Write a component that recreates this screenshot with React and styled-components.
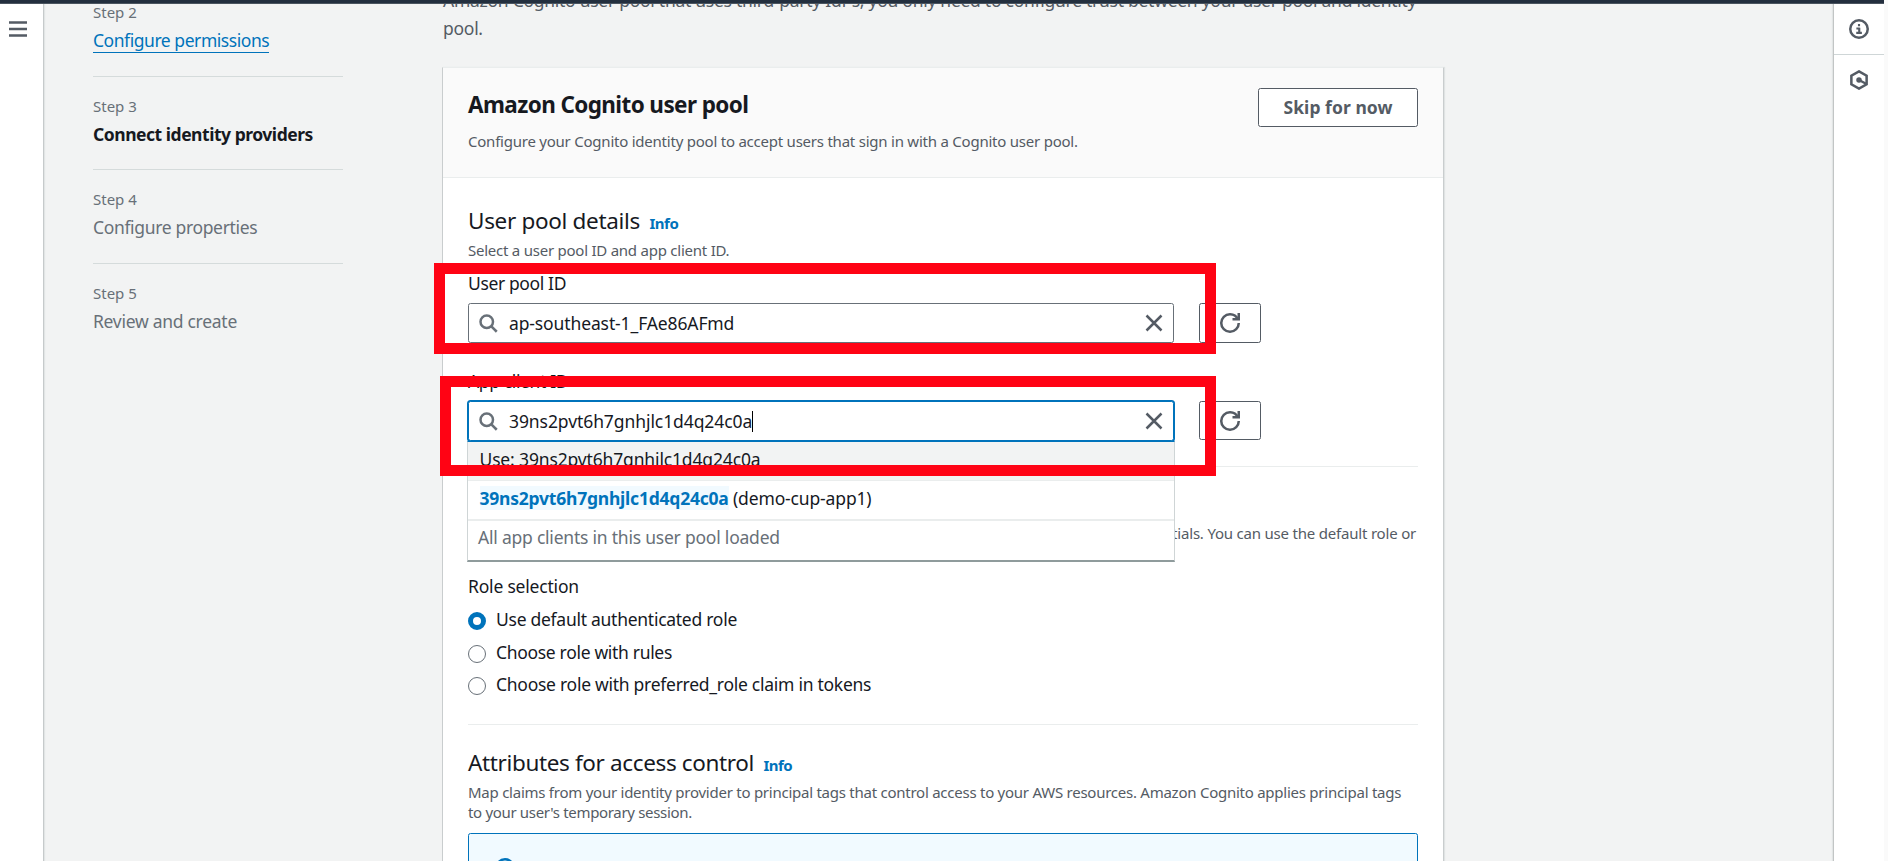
import React from 'react';
import styled, { createGlobalStyle, css } from 'styled-components';

const GlobalStyle = createGlobalStyle`
  * { box-sizing: border-box; }
  body {
    margin: 0;
    background: #f2f3f3;
    font-family: "Noto Sans", "Open Sans", sans-serif;
    font-size: 17.5px;
    line-height: 24px;
    color: #16191f;
  }
  h2, h3, p, ol { margin: 0; padding: 0; font-weight: 400; }
`;

const track = css`
  letter-spacing: ${(p) => p.$track || 0}px;
`;

const Screen = styled.div`
  position: relative;
  display: flex;
  width: 1888px;
  height: 861px;
  overflow: hidden;
`;

const Console = styled.div`
  display: flex;
  flex-direction: column;
  width: 1884px;
`;

const ScrollStrip = styled.div`
  width: 4px;
  background: #fafafa;
`;

const TopBar = styled.header`
  flex: none;
  height: 4px;
  background: #232f3e;
  border-bottom: 1px solid #4a545f;
`;

const Body = styled.div`
  display: flex;
  flex: 1;
  min-height: 0;
  overflow: hidden;
`;

const LeftRail = styled.aside`
  flex: none;
  width: 44px;
  padding: 15px 0 0 8px;
  background: #fff;
  border-right: 1px solid #c6cacb;
  box-shadow: 1px 0 1px #e2e5e5;
`;

const RightRail = styled.aside`
  flex: none;
  width: 51px;
  margin-left: auto;
  background: #fff;
  border-left: 1px solid #c2c5c5;
  box-shadow: -1px 0 1px #e2e5e5;
`;

const RailItem = styled.div`
  display: flex;
  align-items: center;
  justify-content: center;
  height: ${(p) => (p.$divided ? 51 : 50)}px;
  border-bottom: ${(p) => (p.$divided ? '1px solid #cfd6d7' : 'none')};
`;

const Icon = styled.svg.attrs({ viewBox: '0 0 16 16', fill: 'none', stroke: 'currentColor' })`
  display: block;
  flex: none;
  width: 20px;
  height: 20px;
  color: ${(p) => p.$color || '#545b64'};
  stroke-width: 2;
`;

const Steps = styled.ol`
  flex: none;
  width: 250px;
  margin: -21.1px 0 0 49px;
  list-style: none;
`;

const Step = styled.li`
  height: 93.75px;
  padding-top: 19px;
  border-bottom: ${(p) => (p.$last ? 'none' : '1px solid #d5dbdb')};
`;

const StepNumber = styled.div`
  font-size: 15px;
  line-height: 20px;
  color: #687078;
`;

const StepTitle = styled.span`
  display: inline-block;
  margin-top: 7px;
  line-height: 23px;
  color: #687078;
  ${track}
  ${(p) => p.$state === 'current' && css`font-weight: 700; color: #16191f;`}
  ${(p) => p.$state === 'link' && css`color: #0073bb; border-bottom: 1px solid #0073bb;`}
`;

const Main = styled.main`
  flex: none;
  width: 1002px;
  margin: -18px 0 0 99px;
`;

const Intro = styled.p`
  padding-left: 1px;
  line-height: 28px;
  white-space: nowrap;
  color: #545b64;
  ${track}
`;

const Card = styled.section`
  margin-top: 25px;
  background: #fff;
  border-top: 1px solid #eaeded;
  border-left: 1px solid #c9cdce;
  border-right: 1px solid #c9cdce;
  box-shadow: 1px 0 1px #e0e3e3;
`;

const CardHeader = styled.div`
  display: flex;
  align-items: flex-start;
  justify-content: space-between;
  height: 110px;
  padding: 20px 25px 0;
  background: #fafafa;
  border-bottom: 1px solid #eaeded;
`;

const CardTitle = styled.h2`
  margin-top: 3px;
  font-size: 22.5px;
  line-height: 28px;
  font-weight: 700;
  ${track}
`;

const SectionTitle = styled.h3`
  font-size: 22.5px;
  line-height: 28px;
  white-space: nowrap;
  ${track}
`;

const InfoLink = styled.a`
  margin-left: 4px;
  font-size: 15px;
  line-height: 1;
  font-weight: 700;
  letter-spacing: -0.5px;
  color: #0073bb;
`;

const Description = styled.p`
  margin-top: ${(p) => p.$top ?? 5}px;
  font-size: 15px;
  line-height: 20px;
  white-space: nowrap;
  color: #545b64;
  ${track}
`;

const Line = styled.span`
  display: block;
  ${track}
`;

const RoleDescription = styled(Description)`
  padding-right: 2px;
  text-align: right;
  & > span { display: block; text-align: left; }
`;

const Button = styled.button`
  display: flex;
  align-items: center;
  justify-content: center;
  width: ${(p) => p.$width}px;
  height: ${(p) => p.$height}px;
  padding: 0 0 1px;
  background: #fff;
  border: 1px solid #545b64;
  border-radius: 2.5px;
  font: 700 17.5px/24px "Noto Sans", sans-serif;
  color: #545b64;
  ${track}
`;

const IconButton = styled(Button)`
  padding: 0;
`;

const CardBody = styled.div`
  padding: 29px 25px 0;
`;

const Field = styled.div`
  margin-top: ${(p) => p.$top}px;
`;

const Label = styled.div`
  ${track}
`;

const FieldRow = styled.div`
  display: flex;
  gap: 25px;
  margin-top: 8px;
`;

const SearchBox = styled.div`
  position: relative;
  display: flex;
  align-items: center;
  width: 706px;
  height: 40px;
  padding: 0 9px;
  background: #fff;
  border: 1px solid #687078;
  border-radius: 2.5px;
  ${(p) => p.$focused && css`
    border-color: #0073bb;
    box-shadow: 0 0 0 1px #0073bb;
  `}
`;

const Value = styled.span`
  display: flex;
  align-items: center;
  flex: 1;
  margin-left: 11px;
  ${track}
`;

const Caret = styled.i`
  width: 1px;
  height: 21px;
  background: #000;
`;

const Dropdown = styled.div`
  position: absolute;
  z-index: 2;
  top: 39px;
  left: -2px;
  width: 708px;
  height: 121px;
  background: #fff;
  border: solid #cfd5d6;
  border-width: 1px 1px 2px;
  border-top-color: #0073bb;
  border-bottom-color: #8f9b9c;
`;

const Option = styled.div`
  height: ${(p) => p.$height}px;
  padding: 5px 12px 0 11.5px;
  white-space: nowrap;
  background: ${(p) => (p.$active ? '#f2f3f3' : '#fff')};
  border-bottom: ${(p) => p.$line}px solid #eaeded;
  ${track}
`;

const Match = styled.mark`
  font-weight: 700;
  color: #0073bb;
  background: #f1faff;
  ${track}
`;

const ListStatus = styled.div`
  padding: 4px 10px 0;
  color: #687078;
  ${track}
`;

const Divider = styled.hr`
  height: 1px;
  margin: ${(p) => p.$top}px 0 ${(p) => p.$bottom}px;
  border: 0;
  background: #eaeded;
`;

const RadioRow = styled.label`
  display: flex;
  align-items: flex-start;
  gap: 10px;
  margin-top: ${(p) => p.$top}px;
  ${track}
`;

const RadioDot = styled.i`
  flex: none;
  width: 18px;
  height: 18px;
  margin-top: 5px;
  border-radius: 50%;
  background: #fff;
  border: ${(p) => (p.$checked ? '5.5px solid #0073bb' : '1.3px solid #687078')};
`;

const Alert = styled.div`
  display: flex;
  gap: 14px;
  height: 80px;
  margin-top: 11px;
  padding: 24px 26px;
  background: #f1faff;
  border: 1px solid #0073bb;
  border-radius: 2.5px;
`;

const AlertText = styled.p`
  padding-top: 4px;
`;

/* Red annotation frame drawn over the form */
const Highlight = styled.div`
  position: absolute;
  z-index: 5;
  top: ${(p) => p.$y}px;
  left: ${(p) => p.$x}px;
  width: ${(p) => p.$w}px;
  height: ${(p) => p.$h}px;
  border: 11px solid #ff0314;
`;

const SearchIcon = () => (
  <Icon $color="#687078"><circle cx="7" cy="7" r="5" /><path d="m15 15-4.5-4.5" /></Icon>
);
const CloseIcon = () => <Icon><path d="m2 2 12 12M14 2 2 14" /></Icon>;
const RefreshIcon = () => (
  <Icon>
    <path d="M10 5h5V0" />
    <path d="M15 8a6.957 6.957 0 0 1-7 7 6.957 6.957 0 0 1-7-7 6.957 6.957 0 0 1 7-7 6.87 6.87 0 0 1 6.3 4" />
  </Icon>
);
const MenuIcon = () => <Icon><path d="M.8 2.8h14.4M.8 8h14.4M.8 13.2h14.4" /></Icon>;
const InfoIcon = () => (
  <Icon>
    <circle cx="8" cy="8" r="7" />
    <path d="M8 3.9v1.9M5.9 7.6H8.6M8.2 7v4.2M5.8 11.1h4.5" strokeWidth="1.7" />
  </Icon>
);
const HexIcon = () => (
  <Icon>
    <path d="M8 1.1 14.1 4.5v7L8 14.9 1.9 11.5v-7z" />
    <circle cx="8" cy="8" r="2.2" fill="currentColor" stroke="none" />
    <path d="M8 8l6 3.2" />
  </Icon>
);
const AlertIcon = () => (
  <Icon $color="#0073bb"><circle cx="8" cy="8" r="7" /><path d="M8 11V7M8 6V4" /></Icon>
);

const steps = [
  { n: 2, title: 'Configure permissions', state: 'link', track: -0.45 },
  { n: 3, title: 'Connect identity providers', state: 'current', track: -0.47 },
  { n: 4, title: 'Configure properties', track: -0.34 },
  { n: 5, title: 'Review and create', track: -0.28 },
];

const roles = [
  { label: 'Use default authenticated role', checked: true, track: -0.27, top: 9 },
  { label: 'Choose role with rules', track: -0.32, top: 8.5 },
  { label: 'Choose role with preferred_role claim in tokens', track: -0.27, top: 8.5 },
];

const clientId = '39ns2pvt6h7gnhjlc1d4q24c0a';

export default function App() {
  return (
    <Screen>
      <GlobalStyle />
      <Console>
        <TopBar />
        <Body>
          <LeftRail><MenuIcon /></LeftRail>
          <Steps>
            {steps.map((s, i) => (
              <Step key={s.n} $last={i === steps.length - 1}>
                <StepNumber>Step {s.n}</StepNumber>
                <StepTitle $state={s.state} $track={s.track}>{s.title}</StepTitle>
              </Step>
            ))}
          </Steps>
          <Main>
            <Intro $track={-0.27}>
              Amazon Cognito user pool that uses third-party IdPs, you only need to configure trust between your user pool and identity
              <br />
              pool.
            </Intro>
            <Card>
              <CardHeader>
                <div>
                  <CardTitle $track={-0.6}>Amazon Cognito user pool</CardTitle>
                  <Description $top={12} $track={-0.23}>
                    Configure your Cognito identity pool to accept users that sign in with a Cognito user pool.
                  </Description>
                </div>
                <Button $width={160} $height={39} $track={0.05}>Skip for now</Button>
              </CardHeader>
              <CardBody>
                <SectionTitle $track={-0.32}>User pool details <InfoLink>Info</InfoLink></SectionTitle>
                <Description $track={-0.24}>Select a user pool ID and app client ID.</Description>

                <Field $top={11}>
                  <Label $track={-0.37}>User pool ID</Label>
                  <FieldRow>
                    <SearchBox>
                      <SearchIcon />
                      <Value $track={-0.12}>ap-southeast-1_FAe86AFmd</Value>
                      <CloseIcon />
                    </SearchBox>
                    <IconButton $width={62} $height={40}><RefreshIcon /></IconButton>
                  </FieldRow>
                </Field>

                <Field $top={26}>
                  <Label $track={-0.37}>App client ID</Label>
                  <FieldRow>
                    <SearchBox $focused>
                      <SearchIcon />
                      <Value $track={-0.08}>{clientId}<Caret /></Value>
                      <CloseIcon />
                      <Dropdown>
                        <Option $active $height={39} $line={1} $track={-0.15}>Use: {clientId}</Option>
                        <Option $height={40} $line={2} $track={-0.15}>
                          <Match $track={-0.22}>{clientId}</Match> (demo-cup-app1)
                        </Option>
                        <ListStatus $track={-0.22}>All app clients in this user pool loaded</ListStatus>
                      </Dropdown>
                    </SearchBox>
                    <IconButton $width={62} $height={39}><RefreshIcon /></IconButton>
                  </FieldRow>
                </Field>

                <Divider $top={25} $bottom={22} />
                <SectionTitle $track={-0.3}>Role settings</SectionTitle>
                <RoleDescription $top={6} $track={-0.2}>
                  Cognito assigns an IAM role to your users when it issues temporary credentials. You can use the default role or
                  <span>choose another role.</span>
                </RoleDescription>

                <Field $top={11}>
                  <Label $track={-0.2}>Role selection</Label>
                  {roles.map((r) => (
                    <RadioRow key={r.label} $top={r.top} $track={r.track}>
                      <RadioDot $checked={r.checked} />
                      {r.label}
                    </RadioRow>
                  ))}
                </Field>

                <Divider $top={28} $bottom={24} />
                <SectionTitle $track={-0.36}>Attributes for access control <InfoLink>Info</InfoLink></SectionTitle>
                <Description>
                  <Line $track={-0.25}>
                    Map claims from your identity provider to principal tags that control access to your AWS resources. Amazon Cognito applies principal tags
                  </Line>
                  <Line $track={-0.33}>to your user's temporary session.</Line>
                </Description>
                <Alert>
                  <AlertIcon />
                  <AlertText>Update the trust policy for your authenticated role.</AlertText>
                </Alert>
              </CardBody>
            </Card>
          </Main>
          <RightRail>
            <RailItem $divided><InfoIcon /></RailItem>
            <RailItem><HexIcon /></RailItem>
          </RightRail>
        </Body>
      </Console>
      <ScrollStrip />
      <Highlight $x={434} $y={263} $w={782} $h={91} />
      <Highlight $x={440} $y={376} $w={776} $h={100} />
    </Screen>
  );
}
